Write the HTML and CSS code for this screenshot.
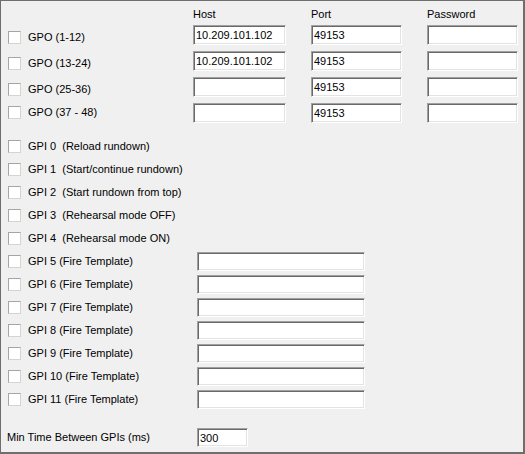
FILE: index.html
```html
<!DOCTYPE html>
<html>
<head>
    <meta charset="UTF-8">
    <meta name="viewport" content="width=device-width, initial-scale=1.0">
    <title>GPI / GPO Settings</title>
    <link rel="stylesheet" href="styles.css">
</head>
<body>
    <div class="panel">
        <!-- GPO outputs: host / port / password per bank -->
        <div class="gpo-head">
            <span></span>
            <span>Host</span>
            <span>Port</span>
            <span>Password</span>
        </div>
        <div class="gpo-row">
            <label class="check"><input type="checkbox">GPO (1-12)</label>
            <input class="field" type="text" value="10.209.101.102">
            <input class="field" type="text" value="49153">
            <input class="field" type="password">
        </div>
        <div class="gpo-row">
            <label class="check"><input type="checkbox">GPO (13-24)</label>
            <input class="field" type="text" value="10.209.101.102">
            <input class="field" type="text" value="49153">
            <input class="field" type="password">
        </div>
        <div class="gpo-row">
            <label class="check"><input type="checkbox">GPO (25-36)</label>
            <input class="field" type="text">
            <input class="field" type="text" value="49153">
            <input class="field" type="password">
        </div>
        <div class="gpo-row last">
            <label class="check"><input type="checkbox">GPO (37 - 48)</label>
            <input class="field" type="text">
            <input class="field" type="text" value="49153">
            <input class="field pw-up" type="password">
        </div>

        <!-- GPI inputs -->
        <div class="gpi-list">
            <div class="gpi-row"><label class="check"><input type="checkbox">GPI 0  (Reload rundown)</label></div>
            <div class="gpi-row"><label class="check"><input type="checkbox">GPI 1  (Start/continue rundown)</label></div>
            <div class="gpi-row"><label class="check"><input type="checkbox">GPI 2  (Start rundown from top)</label></div>
            <div class="gpi-row"><label class="check"><input type="checkbox">GPI 3  (Rehearsal mode OFF)</label></div>
            <div class="gpi-row"><label class="check"><input type="checkbox">GPI 4  (Rehearsal mode ON)</label></div>
            <div class="gpi-row"><label class="check"><input type="checkbox">GPI 5 (Fire Template)</label><input class="field template" type="text"></div>
            <div class="gpi-row"><label class="check"><input type="checkbox">GPI 6 (Fire Template)</label><input class="field template" type="text"></div>
            <div class="gpi-row"><label class="check"><input type="checkbox">GPI 7 (Fire Template)</label><input class="field template" type="text"></div>
            <div class="gpi-row"><label class="check"><input type="checkbox">GPI 8 (Fire Template)</label><input class="field template" type="text"></div>
            <div class="gpi-row"><label class="check"><input type="checkbox">GPI 9 (Fire Template)</label><input class="field template" type="text"></div>
            <div class="gpi-row"><label class="check"><input type="checkbox">GPI 10 (Fire Template)</label><input class="field template" type="text"></div>
            <div class="gpi-row"><label class="check"><input type="checkbox">GPI 11 (Fire Template)</label><input class="field template" type="text"></div>
        </div>

        <div class="min-time">
            <span class="min-label">Min Time Between GPIs (ms)</span>
            <input class="field short" type="text" value="300">
        </div>
    </div>
</body>
</html>
```

FILE: styles.css
```css
* {
    box-sizing: border-box;
}
body {
    margin: 0;
    padding: 0;
    background-color: #f0f0f0;
    font-family: "Liberation Sans", Arial, sans-serif;
    font-size: 11px;
    color: #000;
}
.panel {
    width: 525px;
    height: 454px;
    border: 1px solid #6e6e6e;
    border-right-width: 2px;
    border-bottom-width: 2px;
    background-color: #f0f0f0;
    padding: 6px 0 0 6px;
}
.gpo-head,
.gpo-row {
    display: grid;
    grid-template-columns: 161px 93px 91px 91px;
    column-gap: 25px;
}
.gpo-head {
    height: 11px;
    line-height: 13px;
    margin-top: 1px;
    margin-bottom: 6px;
}
.gpo-row {
    height: 20px;
    margin-bottom: 6px;
}
.gpo-row.last {
    margin-top: 1px;
}
.gpo-row .check {
    padding-top: 6px;
}
.gpo-row.last .check {
    padding-top: 3px;
}
.pw-up {
    align-self: start;
    margin-top: -3px;
}
.check {
    display: flex;
    align-items: center;
    height: 13px;
    white-space: pre;
    line-height: 13px;
    align-self: start;
    box-sizing: content-box;
}
.check input {
    appearance: none;
    -webkit-appearance: none;
    width: 13px;
    height: 13px;
    margin: 0 7px 0 1px;
    background: #fff;
    border: 1px solid #a5a5a5;
    border-right-color: #d4d4d4;
    border-bottom-color: #d4d4d4;
    flex: none;
}
.field {
    height: 20px;
    width: 100%;
    margin: 0;
    padding: 0 2px;
    font-family: "Liberation Sans", Arial, sans-serif;
    font-size: 11px;
    color: #000;
    background: #fff;
    border: 1px solid;
    border-color: #a0a0a0 #fff #fff #a0a0a0;
    box-shadow: inset 1px 1px 0 #696969, inset -1px -1px 0 #e3e3e3;
    outline: none;
}
.gpi-list {
    margin-top: 12px;
    display: flex;
    flex-direction: column;
}
.gpi-row {
    display: grid;
    grid-template-columns: 190px 168px;
    align-items: center;
    height: 23px;
}
.gpi-row .check {
    align-self: center;
}
.template {
    height: 19px;
    margin-top: -1px;
}
.min-time {
    display: grid;
    grid-template-columns: 190px 51px;
    align-items: center;
    margin-top: 17px;
}
.min-label {
    line-height: 13px;
}
.short {
    height: 19px;
}
```
